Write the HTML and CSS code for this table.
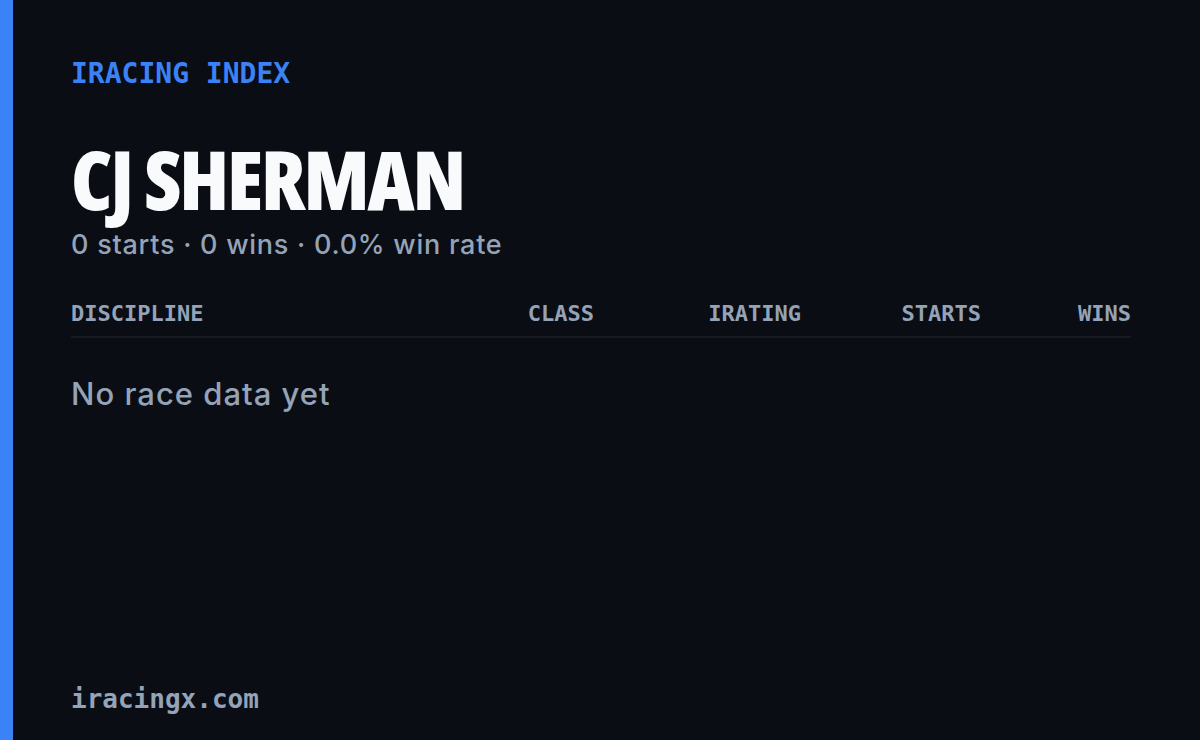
FILE: index.html
```html
<!DOCTYPE html>
<html lang="en">
<head>
<meta charset="utf-8">
<title>iRacing Index – CJ Sherman</title>
<link rel="stylesheet" href="styles.css">
</head>
<body>
<div class="page">
  <div class="accent"></div>
  <main class="card">
    <div class="brand">IRACING INDEX</div>
    <h1 class="name">CJ SHERMAN</h1>
    <p class="summary">0 starts · 0 wins · 0.0% win rate</p>
    <div class="table">
      <div class="thead">
        <span class="th th-left">DISCIPLINE</span>
        <span class="th">CLASS</span>
        <span class="th">IRATING</span>
        <span class="th">STARTS</span>
        <span class="th">WINS</span>
      </div>
      <p class="empty">No race data yet</p>
    </div>
    <footer class="footer">iracingx.com</footer>
  </main>
</div>
</body>
</html>
```

FILE: styles.css
```css
* { box-sizing: border-box; }
html, body {
  margin: 0;
  padding: 0;
  width: 1200px;
  height: 740px;
  background: #0a0d14;
  overflow: hidden;
}
.page {
  display: flex;
  width: 1200px;
  height: 740px;
}
.accent {
  width: 13px;
  flex: 0 0 13px;
  background: #3b82f6;
}
.card {
  flex: 1;
  display: flex;
  flex-direction: column;
  padding: 60px 69px 26px 58px;
}
.brand {
  font-family: "DejaVu Sans Mono", "Liberation Mono", monospace;
  font-size: 28px;
  line-height: 28px;
  font-weight: 700;
  color: #3b82f6;
}
.name {
  margin: 54px 0 0;
  font-family: "Open Sans", sans-serif;
  font-stretch: 75%;
  font-weight: 800;
  font-size: 82px;
  line-height: 72px;
  letter-spacing: -2.2px;
  color: #f8fafc;
}
.summary {
  margin: 13px 0 0;
  font-family: "Inter", sans-serif;
  font-size: 27px;
  line-height: 36px;
  font-weight: 500;
  letter-spacing: 0.75px;
  color: #94a3b8;
}
.table {
  margin-top: 39px;
}
.thead {
  display: grid;
  grid-template-columns: 1fr 200px 207px 180px 150px;
  padding-bottom: 10px;
  border-bottom: 2px solid #161a24;
}
.th {
  font-family: "DejaVu Sans Mono", "Liberation Mono", monospace;
  font-size: 22px;
  line-height: 24px;
  font-weight: 700;
  color: #94a3b8;
  text-align: right;
}
.th-left { text-align: left; }
.empty {
  margin: 36px 0 0;
  font-family: "Inter", sans-serif;
  font-size: 31px;
  line-height: 40px;
  font-weight: 500;
  letter-spacing: 1px;
  color: #94a3b8;
}
.footer {
  margin-top: auto;
  font-family: "DejaVu Sans Mono", "Liberation Mono", monospace;
  font-size: 26px;
  line-height: 30px;
  font-weight: 700;
  color: #94a3b8;
}
```
